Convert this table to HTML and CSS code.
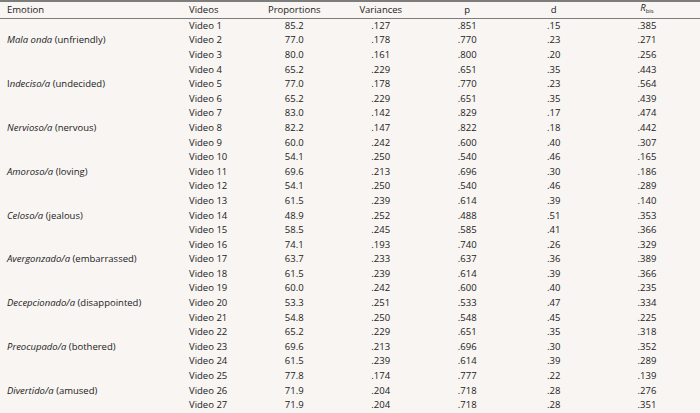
FILE: index.html
```html
<!DOCTYPE html>
<html>
<head>
<meta charset="utf-8">
<link rel="stylesheet" href="styles.css">
</head>
<body>
<table class="tbl">
<colgroup>
<col class="c-emo"><col class="c-vid"><col class="c-num"><col class="c-num"><col class="c-num"><col class="c-num"><col class="c-last">
</colgroup>
<thead>
<tr><th class="emo">Emotion</th><th class="vid">Videos</th><th>Proportions</th><th>Variances</th><th>p</th><th>d</th><th><i>R</i><sub>bis</sub></th></tr>
</thead>
<tbody>
<tr><td class="emo" rowspan="3"><i>Mala onda</i> (unfriendly)</td><td class="vid">Video 1</td><td>85.2</td><td>.127</td><td>.851</td><td>.15</td><td>.385</td></tr>
<tr><td class="vid">Video 2</td><td>77.0</td><td>.178</td><td>.770</td><td>.23</td><td>.271</td></tr>
<tr><td class="vid">Video 3</td><td>80.0</td><td>.161</td><td>.800</td><td>.20</td><td>.256</td></tr>
<tr><td class="emo" rowspan="3">I<i>ndeciso/a</i> (undecided)</td><td class="vid">Video 4</td><td>65.2</td><td>.229</td><td>.651</td><td>.35</td><td>.443</td></tr>
<tr><td class="vid">Video 5</td><td>77.0</td><td>.178</td><td>.770</td><td>.23</td><td>.564</td></tr>
<tr><td class="vid">Video 6</td><td>65.2</td><td>.229</td><td>.651</td><td>.35</td><td>.439</td></tr>
<tr><td class="emo" rowspan="3"><i>Nervioso/a</i> (nervous)</td><td class="vid">Video 7</td><td>83.0</td><td>.142</td><td>.829</td><td>.17</td><td>.474</td></tr>
<tr><td class="vid">Video 8</td><td>82.2</td><td>.147</td><td>.822</td><td>.18</td><td>.442</td></tr>
<tr><td class="vid">Video 9</td><td>60.0</td><td>.242</td><td>.600</td><td>.40</td><td>.307</td></tr>
<tr><td class="emo" rowspan="3"><i>Amoroso/a</i> (loving)</td><td class="vid">Video 10</td><td>54.1</td><td>.250</td><td>.540</td><td>.46</td><td>.165</td></tr>
<tr><td class="vid">Video 11</td><td>69.6</td><td>.213</td><td>.696</td><td>.30</td><td>.186</td></tr>
<tr><td class="vid">Video 12</td><td>54.1</td><td>.250</td><td>.540</td><td>.46</td><td>.289</td></tr>
<tr><td class="emo" rowspan="3"><i>Celoso/a</i> (jealous)</td><td class="vid">Video 13</td><td>61.5</td><td>.239</td><td>.614</td><td>.39</td><td>.140</td></tr>
<tr><td class="vid">Video 14</td><td>48.9</td><td>.252</td><td>.488</td><td>.51</td><td>.353</td></tr>
<tr><td class="vid">Video 15</td><td>58.5</td><td>.245</td><td>.585</td><td>.41</td><td>.366</td></tr>
<tr><td class="emo" rowspan="3"><i>Avergonzado/a</i> (embarrassed)</td><td class="vid">Video 16</td><td>74.1</td><td>.193</td><td>.740</td><td>.26</td><td>.329</td></tr>
<tr><td class="vid">Video 17</td><td>63.7</td><td>.233</td><td>.637</td><td>.36</td><td>.389</td></tr>
<tr><td class="vid">Video 18</td><td>61.5</td><td>.239</td><td>.614</td><td>.39</td><td>.366</td></tr>
<tr><td class="emo" rowspan="3"><i>Decepcionado/a</i> (disappointed)</td><td class="vid">Video 19</td><td>60.0</td><td>.242</td><td>.600</td><td>.40</td><td>.235</td></tr>
<tr><td class="vid">Video 20</td><td>53.3</td><td>.251</td><td>.533</td><td>.47</td><td>.334</td></tr>
<tr><td class="vid">Video 21</td><td>54.8</td><td>.250</td><td>.548</td><td>.45</td><td>.225</td></tr>
<tr><td class="emo" rowspan="3"><i>Preocupado/a</i> (bothered)</td><td class="vid">Video 22</td><td>65.2</td><td>.229</td><td>.651</td><td>.35</td><td>.318</td></tr>
<tr><td class="vid">Video 23</td><td>69.6</td><td>.213</td><td>.696</td><td>.30</td><td>.352</td></tr>
<tr><td class="vid">Video 24</td><td>61.5</td><td>.239</td><td>.614</td><td>.39</td><td>.289</td></tr>
<tr><td class="emo" rowspan="3"><i>Divertido/a</i> (amused)</td><td class="vid">Video 25</td><td>77.8</td><td>.174</td><td>.777</td><td>.22</td><td>.139</td></tr>
<tr><td class="vid">Video 26</td><td>71.9</td><td>.204</td><td>.718</td><td>.28</td><td>.276</td></tr>
<tr><td class="vid">Video 27</td><td>71.9</td><td>.204</td><td>.718</td><td>.28</td><td>.351</td></tr>
</tbody>
</table>
</body>
</html>
```
FILE: styles.css
```css
html, body {
  margin: 0;
  padding: 0;
  background: #f8f5f2;
}
.tbl {
  width: 700px;
  border-collapse: collapse;
  table-layout: fixed;
  font-family: "Open Sans", "Liberation Sans", sans-serif;
  font-size: 9.5px;
  color: #222;
  border-bottom: 2px solid #7d7d7d;
}
.c-emo { width: 183px; }
.c-vid { width: 71px; }
.c-num { width: 86.5px; }
.c-last { width: 100px; }
.tbl thead tr {
  height: 17px;
}
.tbl th {
  font-weight: normal;
  text-align: center;
  padding: 0 6px 0 0;
  border-top: 2px solid #7d7d7d;
  border-bottom: 1px solid #7d7d7d;
  line-height: 12px;
  vertical-align: middle;
}
.tbl td {
  text-align: center;
  padding: 0 6px 0 0;
  height: 14.6px;
  line-height: 12px;
  vertical-align: middle;
}
.tbl .emo {
  text-align: left;
  padding-left: 7px;
}
.tbl .vid {
  text-align: left;
  padding-left: 6px;
}
.tbl sub {
  font-size: 6px;
  vertical-align: -2px;
}
```
